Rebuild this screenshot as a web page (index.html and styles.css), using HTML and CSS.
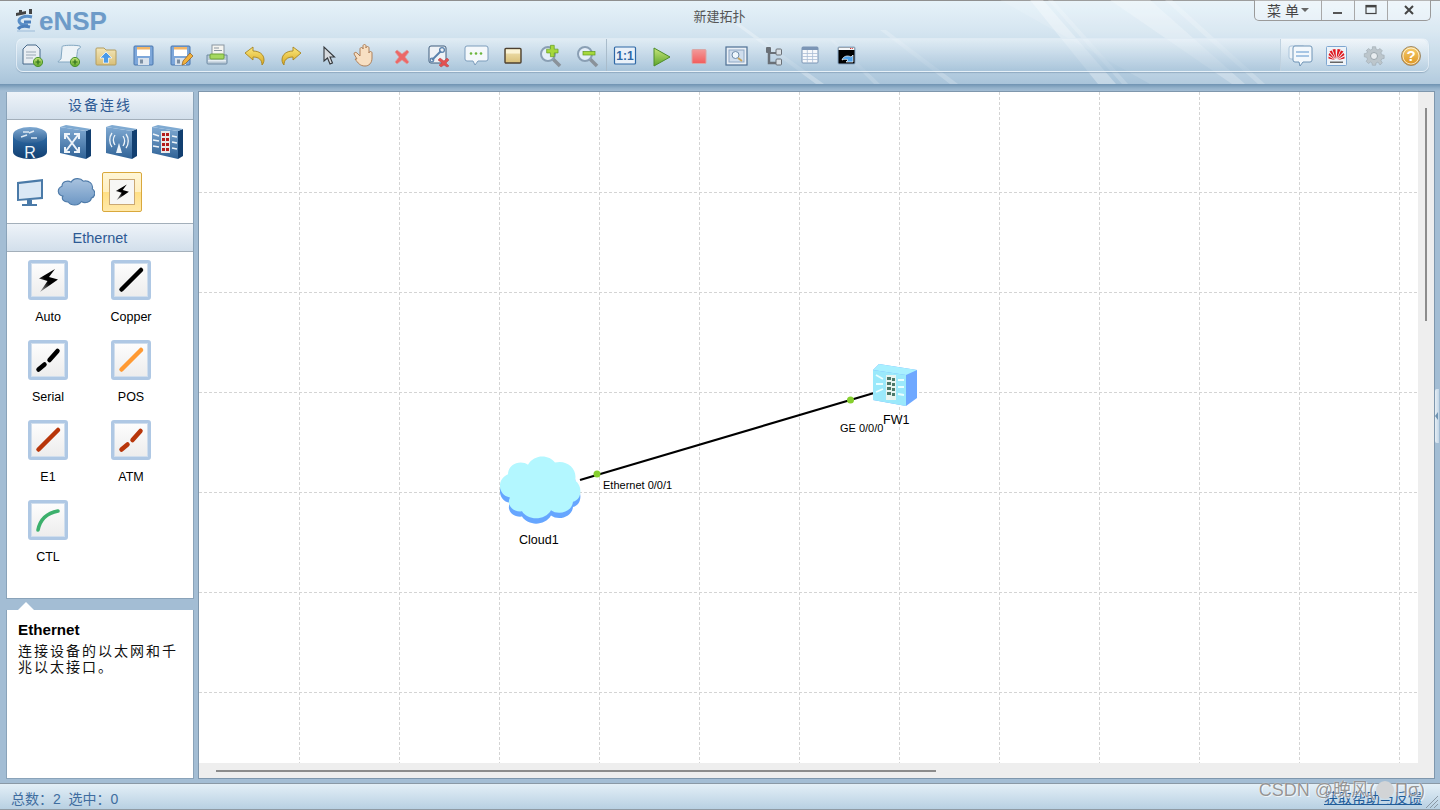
FILE: index.html
```html
<!DOCTYPE html>
<html lang="zh">
<head>
<meta charset="utf-8">
<title>eNSP</title>
<link rel="stylesheet" href="styles.css">
</head>
<body>
<svg class="defs" width="0" height="0" aria-hidden="true">
  <defs>
    <linearGradient id="g-blue" x1="0" y1="0" x2="0" y2="1"><stop offset="0" stop-color="#7fa9d2"/><stop offset="1" stop-color="#2f6296"/></linearGradient>
    <linearGradient id="g-side" x1="0" y1="0" x2="0" y2="1"><stop offset="0" stop-color="#2e6ca8"/><stop offset="1" stop-color="#123f70"/></linearGradient>
    <linearGradient id="g-tan" x1="0" y1="0" x2="0" y2="1"><stop offset="0" stop-color="#f3e6b8"/><stop offset="1" stop-color="#d8bf78"/></linearGradient>
    <linearGradient id="g-yel" x1="0" y1="0" x2="0" y2="1"><stop offset="0" stop-color="#fbe97f"/><stop offset="1" stop-color="#d8a820"/></linearGradient>
    <linearGradient id="g-red" x1="0" y1="0" x2="0" y2="1"><stop offset="0" stop-color="#f29a9a"/><stop offset="1" stop-color="#f25c5c"/></linearGradient>
    <linearGradient id="g-green" x1="0" y1="0" x2="0" y2="1"><stop offset="0" stop-color="#c7e57a"/><stop offset="1" stop-color="#5da52a"/></linearGradient>
    <linearGradient id="g-orange" x1="0" y1="0" x2="0" y2="1"><stop offset="0" stop-color="#f7cf6e"/><stop offset="1" stop-color="#dc9320"/></linearGradient>
    <linearGradient id="g-cloud" x1="0" y1="0" x2="0" y2="1"><stop offset="0" stop-color="#a9c3df"/><stop offset="1" stop-color="#6d97c4"/></linearGradient>
    <linearGradient id="g-bolt" x1="1" y1="0" x2="0" y2="1"><stop offset="0.55" stop-color="#000"/><stop offset="1" stop-color="#bbb"/></linearGradient>
    <path id="cloud-shape" d="M13 42C1 40-1 25 11 20 11 10 24 6 31 11 37 1 52 1 58 9 70 6 81 15 78 26 86 31 85 44 76 46 75 56 61 59 54 54 48 64 31 64 25 55 16 56 9 49 13 42Z"/>
    <path id="bolt" d="M23 5 7 14.500 15.500 17 8 28 26 15.500 17 13Z"/>
  </defs>
</svg>

<div class="window">
  <header class="header">
    <svg class="streaks" viewBox="0 0 1440 84" width="1440" height="84" aria-hidden="true">
      <polygon points="1000,0 1440,0 1440,84 1150,84" fill="#fff" opacity=".12"/>
      <polygon points="1030,0 1043,0 1116,84 1098,84" fill="#fff" opacity=".3"/>
      <polygon points="1048,0 1053,0 1128,84 1122,84" fill="#fff" opacity=".18"/>
      <polygon points="1110,0 1150,0 1245,84 1232,84" fill="#fff" opacity=".24"/>
      <polygon points="1165,0 1172,0 1265,84 1258,84" fill="#fff" opacity=".2"/>
      <polygon points="735,24 740,24 824,84 816,84" fill="#fff" opacity=".28"/>
      <polygon points="830,40 834,40 880,84 874,84" fill="#fff" opacity=".16"/>
      <polygon points="880,30 886,30 958,84 950,84" fill="#fff" opacity=".2"/>
    </svg>
    <div class="titlebar">
      <div class="logo">
        <svg class="logo-mark" viewBox="0 0 24 24" width="24" height="24" aria-hidden="true">
          <path d="M2 4 12 2 12 5 2 7Z M5 1h3v4H5z M15 0h3v5h-3z" fill="#444"/>
          <path d="M18 8C10 6 5 9 5 12s4 4 9 4" fill="none" stroke="#5b90c8" stroke-width="3"/>
          <path d="M10 13h7M4 20c3-4 8-3 12-2" fill="none" stroke="#4c80bc" stroke-width="3"/>
          <path d="M3 22h18" stroke="#9cbbd8" stroke-width="1"/>
        </svg>
        <span class="logo-text">eNSP</span>
      </div>
      <div class="title">新建拓扑</div>
      <div class="winctl">
        <div class="wbtn wbtn-menu">菜&nbsp;单<span class="caret"></span></div>
        <div class="wbtn wbtn-s"><svg viewBox="0 0 12 12" width="12" height="12"><rect x="1" y="8" width="9" height="2" fill="#555"/></svg></div>
        <div class="wbtn wbtn-s"><svg viewBox="0 0 12 12" width="12" height="12"><rect x="1" y="1.500" width="10" height="8" fill="none" stroke="#444" stroke-width="1.200"/><rect x="1" y="1" width="10" height="2.400" fill="#444"/></svg></div>
        <div class="wbtn wbtn-x"><svg viewBox="0 0 12 12" width="12" height="12"><path d="M2 2 10 10M10 2 2 10" stroke="#444" stroke-width="2"/></svg></div>
      </div>
    </div>

    <div class="toolbar">
      <div class="tsec tsec-a">
        <svg class="ic" viewBox="0 0 24 24"><path d="M7 1h9l4 4v15H3V5Z" fill="#e9eef3" stroke="#47698a"/><path d="M6 8h10M6 11h10M6 14h7" stroke="#9aa8b5"/><circle cx="18" cy="18" r="4.600" fill="url(#g-green)" stroke="#4c9430"/><path d="M15.500 18h5M18 15.500v5" stroke="#2d6e1c" stroke-width="1.200"/></svg>
        <svg class="ic" viewBox="0 0 24 24"><path d="M6 2C9 1 19 1 23 2 24 3 23 5 21 5 20 8 20 12 19 18H1C1 17 3 16 4 15L5 4C5 3 5 2 6 2Z" fill="#edf3f7" stroke="#83a7c1"/><circle cx="18" cy="18" r="4.600" fill="url(#g-green)" stroke="#4c9430"/><path d="M15.500 18h5M18 15.500v5" stroke="#2d6e1c" stroke-width="1.200"/></svg>
        <svg class="ic" viewBox="0 0 24 24"><path d="M2 5a1 1 0 0 1 1-1h7l2 2h9a1 1 0 0 1 1 1v13a1 1 0 0 1-1 1H3a1 1 0 0 1-1-1Z" fill="url(#g-tan)" stroke="#b39d5f"/><path d="M12 8l6 6h-3.500v5h-5v-5H6Z" fill="#4a9ae8" stroke="#fff" stroke-width=".7"/></svg>
        <svg class="ic" viewBox="0 0 24 24"><rect x="3" y="2" width="19" height="19" rx="1" fill="#7da7da" stroke="#4a76ad"/><rect x="6" y="3" width="13" height="9" fill="#fff"/><rect x="6" y="3" width="13" height="2.500" fill="#f3b667"/><rect x="7" y="14" width="11" height="7" fill="#d9e2ec"/><rect x="9" y="15.500" width="3" height="4" fill="#7d8fa3"/></svg>
        <svg class="ic" viewBox="0 0 24 24"><rect x="3" y="2" width="19" height="19" rx="1" fill="#7da7da" stroke="#4a76ad"/><rect x="6" y="3" width="13" height="9" fill="#fff"/><rect x="6" y="3" width="13" height="2.500" fill="#f3b667"/><rect x="7" y="14" width="11" height="7" fill="#d9e2ec"/><rect x="9" y="15.500" width="3" height="4" fill="#7d8fa3"/><path d="M14 21l1-4 7-8 3 3-8 8Z" fill="#f2b13c" stroke="#8a5a20" stroke-width=".7"/></svg>
        <svg class="ic" viewBox="0 0 24 24"><rect x="7" y="1" width="12" height="11" fill="#f4f4f0" stroke="#8a96a0"/><path d="M9 4h5M9 6.500h8" stroke="#8a96a0"/><path d="M2 11h20v8a1 1 0 0 1-1 1H3a1 1 0 0 1-1-1Z" fill="#b9c9d6" stroke="#6f8aa4"/><rect x="5" y="10" width="14" height="5" rx="1" fill="#a5d85f" stroke="#6ea33a"/><rect x="3" y="16" width="18" height="1.500" fill="#e7eef4"/></svg>
        <svg class="ic" viewBox="0 0 24 24"><path d="M3 9l8-6v4c6 0 11 3 11 9 0 2-1 4-2 5 0-5-3-8-9-8v3Z" fill="url(#g-yel)" stroke="#a88420" stroke-width=".9"/></svg>
        <svg class="ic" viewBox="0 0 24 24"><path d="M22 9l-8-6v4C8 7 3 10 3 16c0 2 1 4 2 5 0-5 3-8 9-8v3Z" fill="url(#g-yel)" stroke="#a88420" stroke-width=".9"/></svg>
        <svg class="ic" viewBox="0 0 24 24"><path d="M8 3v14l3.500-3 2.500 6 2.500-1-2.500-6h4.500Z" fill="#d6dade" stroke="#33373b" stroke-width="1.100"/></svg>
        <svg class="ic" viewBox="0 0 24 24"><path d="M4 15 1 10c0-2 2-2 3-1l3 3V5c0-2 3-2 3 0V2c0-2 3-2 3 0v2c0-2 3-2 3 0v5c0-2 3-2 3 0v5c0 5-3 8-7 8-5 0-7-3-10-7Z" fill="#f7dfc2" stroke="#a8774e" stroke-width=".9"/></svg>
        <svg class="ic" viewBox="0 0 24 24"><path d="M7 6 12 10 17 6 19 8 15 13 19 18 17 20 12 16 7 20 5 18 9 13 5 8Z" fill="#ec6868" stroke="#d9a0a0" stroke-width=".8"/></svg>
        <svg class="ic" viewBox="0 0 24 24"><rect x="2" y="2" width="17" height="17" rx="2" fill="#eef2f6" stroke="#3f5d7c"/><path d="M5 16 14 7" stroke="#5b83ad" stroke-width="2"/><circle cx="15" cy="6" r="2.400" fill="none" stroke="#5b83ad" stroke-width="1.300"/><circle cx="5" cy="16" r="1.800" fill="none" stroke="#5b83ad" stroke-width="1.200"/><path d="M13 14 17 17 20 14 22 16 19 19 22 22 20 23 17 21 14 23 12 21 15 19 11 16Z" fill="#e25050" stroke="#b54040" stroke-width=".5"/></svg>
        <svg class="ic" viewBox="0 0 24 24"><path d="M1 4a2 2 0 0 1 2-2h19a2 2 0 0 1 2 2v11a2 2 0 0 1-2 2H14l-3 4-2-4H3a2 2 0 0 1-2-2Z" fill="#f4f8fb" stroke="#7d9dbc"/><circle cx="7" cy="9.500" r="1.300" fill="#6bb53a"/><circle cx="12" cy="9.500" r="1.300" fill="#6bb53a"/><circle cx="17" cy="9.500" r="1.300" fill="#6bb53a"/></svg>
        <svg class="ic" viewBox="0 0 24 24"><rect x="4" y="4.500" width="16" height="14.500" rx="1" fill="url(#g-tan)" stroke="#4d4030" stroke-width="1.400"/><rect x="5" y="5.500" width="14" height="4" fill="#fbf4d7"/></svg>
        <svg class="ic" viewBox="0 0 24 24"><path d="M15 15 22 22" stroke="#8a929a" stroke-width="3.500"/><circle cx="10" cy="10" r="7" fill="#e4eef8" stroke="#8a9fb4" stroke-width="2"/><path d="M11 3.500h4v4h4v4h-4v4h-4v-4H7v-4h4Z" fill="#a6d83c" stroke="#5f9a1e" stroke-width=".7" transform="translate(2 -2) scale(.95)"/></svg>
        <svg class="ic" viewBox="0 0 24 24"><path d="M15 15 22 22" stroke="#8a929a" stroke-width="3.500"/><circle cx="10" cy="10" r="7" fill="#e4eef8" stroke="#8a9fb4" stroke-width="2"/><rect x="8" y="7.500" width="12" height="3.500" fill="#a6d83c" stroke="#5f9a1e" stroke-width=".7"/></svg>
      </div>
      <div class="tsec tsec-b">
        <svg class="ic" viewBox="0 0 24 24"><rect x="1.500" y="3" width="21" height="17" rx="1" fill="#e9f1f9" stroke="#2f68a6" stroke-width="1.200"/><text x="12" y="16" class="ratio">1:1</text></svg>
        <svg class="ic" viewBox="0 0 24 24"><path d="M4 4 20 13 4 22Z" fill="url(#g-green)" stroke="#4d8d2a"/></svg>
        <svg class="ic" viewBox="0 0 24 24"><rect x="5" y="5.500" width="14" height="14" rx="1" fill="url(#g-red)" stroke="#d9a6a6"/></svg>
        <svg class="ic" viewBox="0 0 24 24"><rect x="2" y="3" width="21" height="18" fill="#e9eff6" stroke="#4e6f93" stroke-width="1.200"/><rect x="5" y="6" width="15" height="12" fill="#cfdded" stroke="#8fa8c4"/><circle cx="11.500" cy="11" r="3.500" fill="#eef6fc" stroke="#6d8aa8"/><path d="M14 14 18 17" stroke="#c9a55c" stroke-width="1.800"/></svg>
        <svg class="ic" viewBox="0 0 24 24"><path d="M8 5V19H16" fill="none" stroke="#6a7077" stroke-width="2.500"/><path d="M8 9H16" stroke="#6a7077" stroke-width="2"/><rect x="5" y="3" width="5" height="6" rx="1" fill="#6a7077"/><rect x="15" y="5" width="5.500" height="6" rx="1" fill="#d8dfe5" stroke="#6a7077"/><rect x="15" y="15" width="5.500" height="6" rx="1" fill="#d8dfe5" stroke="#6a7077"/></svg>
        <svg class="ic" viewBox="0 0 24 24"><rect x="4" y="3" width="16" height="16" rx="1" fill="#f7f9fc" stroke="#7b95b5"/><rect x="4" y="3" width="16" height="3" fill="#7b95b5"/><path d="M4 9.500H20M4 12.500H20M4 15.500H20M9.300 6V19M14.600 6V19" stroke="#a9bdd4" stroke-width=".8"/></svg>
        <svg class="ic" viewBox="0 0 24 24"><rect x="3" y="3" width="17" height="17" rx="1" fill="#000" stroke="#86a6c6"/><rect x="3.500" y="3.500" width="16" height="2.500" fill="#f4f6f8"/><path d="M15 4.500h3" stroke="#d33" stroke-dasharray="1 .8"/><path d="M7 16c1-4 6-5 9-3l2-2v7h-7l2-2c-2-1-4-1-6 0Z" fill="#4da0e8" stroke="#fff" stroke-width=".7"/></svg>
      </div>
      <div class="tsec tsec-c">
        <svg class="ic" viewBox="0 0 24 24"><rect x="1" y="2" width="16" height="13" rx="2" fill="#eef4f9" stroke="#a9c3da"/><path d="M5 4a2 2 0 0 1 2-2h15a2 2 0 0 1 2 2v12a2 2 0 0 1-2 2h-7l-3 4-1-4H7a2 2 0 0 1-2-2Z" fill="#f3f8fc" stroke="#6f94b6"/><path d="M8 8h13M8 12h13" stroke="#5c94cc"/></svg>
        <svg class="ic" viewBox="0 0 24 24"><rect x="1.500" y="2.500" width="20" height="19" rx="1" fill="#eef3f8" stroke="#7ea7d1"/><g fill="#e0161c"><path d="M11 15 7.500 5.500 10.500 5Z"/><path d="M11.500 15 12.500 5 15.500 5.500Z"/><path d="M10.500 15 4.500 7.500 6.800 6.500Z"/><path d="M12 15 16 6.500 18.500 7.500Z"/><path d="M10 15.500 3.500 11 4.500 9Z"/><path d="M12.500 15.500 18.500 9 19.500 11Z"/><path d="M10 16 3.500 14.500 3.500 12.500Z"/><path d="M13 16 19.500 12.500 19.500 14.500Z"/></g><rect x="5" y="17.500" width="13" height="1.500" fill="#666"/></svg>
        <svg class="ic" viewBox="0 0 24 24"><path d="M10 1h4l.6 3 2.400 1 2.600-1.700 2.800 2.800L20.700 8.700l1 2.300 3 .6v4l-3 .6-1 2.300 1.700 2.600-2.800 2.800L17 20.200l-2.400 1-.6 3h-4l-.6-3L7.600 20.200 5 22l-2.800-2.800 1.700-2.600-1-2.300-3-.6v-4l3-.6 1-2.300L2.200 6.100 5 3.300l2.600 1.700L10 4Z" fill="#bcc6cc" stroke="#9aa6ad" stroke-width=".7" transform="translate(2.400 1.900) scale(.8)"/><circle cx="12" cy="12" r="3.500" fill="#e8edf0" stroke="#9aa6ad"/></svg>
        <svg class="ic" viewBox="0 0 24 24"><circle cx="12" cy="12" r="9.500" fill="url(#g-orange)" stroke="#9e8a6a"/><circle cx="12" cy="12" r="8" fill="none" stroke="#fff" stroke-opacity=".7"/><text x="12" y="17" class="help">?</text></svg>
      </div>
    </div>
  </header>

  <div class="rule"></div>

  <main class="main">
    <aside class="side">
      <section class="panel">
        <h2 class="phead phead-cn">设备连线</h2>
        <div class="devices">
          <div class="dev">
            <svg viewBox="0 0 36 36" width="36" height="36"><path d="M1 10v17c0 4 8 7 17 7s17-3 17-7V10Z" fill="url(#g-side)"/><ellipse cx="18" cy="10" rx="17" ry="8" fill="url(#g-blue)"/><path d="M11 7h6M19 13h6M22 6l-5 2M9 12l6-2" stroke="#dce8f2" stroke-width="1.400"/><text x="18" y="33" class="r-letter">R</text></svg>
          </div>
          <div class="dev">
            <svg viewBox="0 0 36 36" width="36" height="36"><path d="M2 2 28 6V34L2 28Z" fill="url(#g-blue)"/><path d="M28 6 33 4V31L28 34Z" fill="#123f70"/><path d="M2 2 8 0 33 4 28 6Z" fill="#7faad2"/><g stroke="#eef4f9" stroke-width="2" fill="none"><path d="M8 10 20 26M8 26 20 10"/><path d="M7 14V9H12M21 14V9H16M7 22V27H12M21 22V27H16"/></g></svg>
          </div>
          <div class="dev">
            <svg viewBox="0 0 36 36" width="36" height="36"><path d="M2 2 28 6V34L2 28Z" fill="url(#g-blue)"/><path d="M28 6 33 4V31L28 34Z" fill="#123f70"/><path d="M2 2 8 0 33 4 28 6Z" fill="#7faad2"/><path d="M15 18 12 28H18Z" fill="#eef4f9"/><g stroke="#eef4f9" stroke-width="1.300" fill="none"><path d="M11 10c-2 3-2 7 0 10M19 11c2 3 2 7 0 10M8 8c-3 4-3 10 0 14M22 9c3 4 3 10 0 14"/></g></svg>
          </div>
          <div class="dev">
            <svg viewBox="0 0 36 36" width="36" height="36"><path d="M2 2 28 6V34L2 28Z" fill="url(#g-blue)"/><path d="M28 6 33 4V31L28 34Z" fill="#123f70"/><path d="M2 2 8 0 33 4 28 6Z" fill="#7faad2"/><rect x="11" y="6" width="9" height="22" fill="#e8e8e8"/><path d="M12 8h3v3h-3zM16 8h3v3h-3zM12 13h3v3h-3zM16 13h3v3h-3zM12 18h3v3h-3zM16 18h3v3h-3zM12 23h3v3h-3zM16 23h3v3h-3z" fill="#b31b1b"/><path d="M3 9l6 2M3 15l6 1M3 21l6 1M22 11l5 1M22 17l5 1M22 23l5 1" stroke="#eef4f9" stroke-width="1.400"/></svg>
          </div>
          <div class="dev">
            <svg viewBox="0 0 36 36" width="36" height="36"><path d="M5 8 31 5V25L5 27Z" fill="#4a7aa8"/><path d="M7 10 29 7.500V23L7 25Z" fill="#dbe8f5"/><path d="M15 26H20V30H25V32H10V30H15Z" fill="#4a7aa8"/></svg>
          </div>
          <div class="dev">
            <svg viewBox="0 0 84 68" width="38" height="31"><use href="#cloud-shape" fill="url(#g-cloud)" stroke="#4f7ba9" stroke-width="2.500"/></svg>
          </div>
          <div class="dev dev-on">
            <div class="dev-card"><svg viewBox="0 0 32 32" width="22" height="22"><use href="#bolt" fill="url(#g-bolt)"/></svg></div>
          </div>
        </div>
        <h2 class="phead phead-en">Ethernet</h2>
        <div class="cables">
          <div class="cable">
            <div class="cable-ic"><svg viewBox="0 0 32 32" width="32" height="32"><use href="#bolt" fill="url(#g-bolt)"/></svg></div>
            <div class="cable-label">Auto</div>
          </div>
          <div class="cable">
            <div class="cable-ic"><svg viewBox="0 0 32 32" width="32" height="32"><path d="M6.500 25.500 26 6" stroke="#000" stroke-width="4.500" stroke-linecap="round"/></svg></div>
            <div class="cable-label">Copper</div>
          </div>
          <div class="cable">
            <div class="cable-ic"><svg viewBox="0 0 32 32" width="32" height="32"><path d="M6.500 25.500 12.500 20.500M17.500 16 25.500 7" stroke="#000" stroke-width="4.500" stroke-linecap="round"/></svg></div>
            <div class="cable-label">Serial</div>
          </div>
          <div class="cable">
            <div class="cable-ic"><svg viewBox="0 0 32 32" width="32" height="32"><path d="M6.500 25.500 26 6" stroke="#ff9a33" stroke-width="4.500" stroke-linecap="round"/></svg></div>
            <div class="cable-label">POS</div>
          </div>
          <div class="cable">
            <div class="cable-ic"><svg viewBox="0 0 32 32" width="32" height="32"><path d="M6.500 25.500 26 6" stroke="#b8360a" stroke-width="4.500" stroke-linecap="round"/></svg></div>
            <div class="cable-label">E1</div>
          </div>
          <div class="cable">
            <div class="cable-ic"><svg viewBox="0 0 32 32" width="32" height="32"><path d="M6.500 25.500 12.500 20.500M17.500 16 25.500 7" stroke="#b8360a" stroke-width="4.500" stroke-linecap="round"/></svg></div>
            <div class="cable-label">ATM</div>
          </div>
          <div class="cable">
            <div class="cable-ic"><svg viewBox="0 0 32 32" width="32" height="32"><path d="M6 26C8 16 15 9 26 7" fill="none" stroke="#3cb06c" stroke-width="3.600" stroke-linecap="round"/></svg></div>
            <div class="cable-label">CTL</div>
          </div>
        </div>
      </section>
      <section class="info">
        <span class="notch"></span>
        <div class="info-title">Ethernet</div>
        <div class="info-text">连接设备的以太网和千兆以太接口。</div>
      </section>
    </aside>

    <section class="canvas">
      <svg class="topo" viewBox="199 92 1219 671" width="1219" height="671">
        <g class="gridlines">
          <path d="M299.500 92V763M399.500 92V763M499.500 92V763M599.500 92V763M699.500 92V763M799.500 92V763M899.500 92V763M999.500 92V763M1099.500 92V763M1199.500 92V763M1299.500 92V763M1399.500 92V763"/>
          <path d="M199 192.500H1418M199 292.500H1418M199 392.500H1418M199 492.500H1418M199 592.500H1418M199 692.500H1418"/>
        </g>
        <line x1="580" y1="480" x2="874" y2="393" class="link"/>
        <circle cx="597" cy="474" r="3.500" class="port"/>
        <circle cx="850.500" cy="400" r="3.500" class="port"/>

        <g transform="translate(497 453) scale(1 1.060)">
          <use href="#cloud-shape" y="5" class="cloud-back"/>
          <use href="#cloud-shape" class="cloud-front"/>
        </g>

        <g transform="translate(873 364)">
          <path d="M0 6 6 0 44 6V34L33 42 0 36Z" fill="#6ea8ff"/>
          <path d="M0 6 6 0 44 6 33 11Z" fill="#a8f0ff"/>
          <path d="M0 6 33 11V42L0 36Z" fill="#9be9fb"/>
          <rect x="13" y="11" width="10" height="25" fill="#e8f4f0"/>
          <path d="M14 13h4v3h-4zM19 14h3v3h-3zM14 18h4v3h-4zM19 19h3v3h-3zM14 23h4v3h-4zM19 24h3v3h-3zM14 28h4v3h-4zM19 29h3v3h-3z" fill="#4d7a6a"/>
          <path d="M3 11l7 4M3 20h7M3 28l7-3M25 16h6M25 23h6M25 30l6 1" stroke="#eaffff" stroke-width="1.800"/>
        </g>

        <text x="603" y="489" class="tlabel">Ethernet 0/0/1</text>
        <text x="840" y="432" class="tlabel">GE 0/0/0</text>
        <text x="519" y="544" class="nlabel">Cloud1</text>
        <text x="883" y="424" class="nlabel">FW1</text>
      </svg>
      <div class="vscroll"><div class="vthumb"></div></div>
      <div class="hscroll"><div class="hthumb"></div></div>
      <div class="corner"></div>
      <span class="collapse"></span>
    </section>
  </main>

  <footer class="status">
    <div class="counts">总数：2&nbsp;&nbsp;选中：0</div>
    <a class="help-link">获取帮助与反馈</a>
    <svg class="grip" viewBox="0 0 14 14" width="14" height="14"><path d="M1 13 13 1M5 13 13 5M9 13 13 9" stroke="#8a98a4"/></svg>
    <div class="watermark">CSDN @晚风(<span class="wm-dot"></span>Пσ)</div>
  </footer>
</div>
</body>
</html>
```
FILE: styles.css
```css
* { box-sizing: border-box; }
html, body { margin: 0; padding: 0; }
body {
  width: 1440px;
  height: 810px;
  overflow: hidden;
  font-family: "Liberation Sans", "Noto Sans CJK SC", sans-serif;
  background: #a3bdd4;
}
.defs { position: absolute; }
.window { display: flex; flex-direction: column; width: 1440px; height: 810px; }

/* header */
.header {
  position: relative;
  height: 84px;
  flex: none;
  border-top: 1px solid #8f8f8f;
  background: linear-gradient(#e6f2f9 0%, #d6e6f1 35%, #bcd3e4 75%, #a9c4da 100%);
}
.streaks { position: absolute; left: 0; top: -1px; }
.titlebar {
  position: relative;
  display: grid;
  grid-template-columns: 1fr auto 1fr;
  height: 37px;
  padding-right: 9px;
}
.logo { display: flex; align-items: flex-start; padding: 8px 0 0 14px; gap: 1px; }
.logo-mark { flex: none; }
.logo-text {
  font-size: 26px;
  font-weight: 700;
  line-height: 25px;
  color: #6d9bc8;
  text-shadow: 0 1px 0 #d4e4f0;
}
.title {
  margin-left: 8px;
  padding-top: 8px;
  font-size: 13px;
  line-height: 16px;
  color: #555;
}
.winctl {
  justify-self: end;
  display: flex;
  height: 21px;
  margin-top: -1px;
  border: 1px solid #9a9a9a;
  border-top: 0;
  border-radius: 0 0 5px 5px;
  background: rgba(255, 255, 255, .28);
}
.wbtn {
  display: flex;
  align-items: center;
  justify-content: center;
  height: 100%;
  border-left: 1px solid #a8a8a8;
}
.wbtn:first-child { border-left: 0; }
.wbtn-menu { width: 66px; font-size: 14px; color: #444; }
.wbtn-s { width: 33px; }
.wbtn-x { width: 43px; }
.caret {
  margin-left: 2px;
  border: 4px solid transparent;
  border-top: 4px solid #666;
  border-bottom: 0;
}
.toolbar {
  position: relative;
  display: flex;
  height: 34px;
  margin: 0 11px 0 16px;
  border: 1px solid rgba(235, 243, 249, .75);
  border-radius: 7px;
  background: linear-gradient(rgba(238, 245, 250, .55), rgba(160, 190, 214, .55));
  box-shadow: 0 1px 1px rgba(90, 120, 150, .4);
}
.tsec { display: flex; align-items: center; gap: 13px; height: 100%; padding-top: 2px; }
.tsec-a { width: 590px; padding-left: 3px; border-right: 1px solid #a9bccb; }
.tsec-b { padding-left: 6px; flex: 1; }
.tsec-c {
  width: 148px;
  padding-left: 7px;
  border-left: 1px solid #c0d2e0;
  background: linear-gradient(rgba(255, 255, 255, .45), rgba(200, 220, 235, .35));
  border-radius: 0 7px 7px 0;
}
.ic { flex: none; width: 24px; height: 24px; overflow: visible; }
.ratio { font: 700 12px "Liberation Sans", sans-serif; fill: #2f68a6; text-anchor: middle; }
.help { font: 700 15px "Liberation Sans", sans-serif; fill: #fff; text-anchor: middle; }
.rule {
  height: 7px;
  flex: none;
  background: linear-gradient(#6f93b2, #94b2cb 60%, #a3bdd4);
}

/* main */
.main { display: flex; flex: none; height: 692px; padding: 0 5px 4px 6px; gap: 4px; }
.side { display: flex; flex-direction: column; width: 188px; flex: none; padding-top: 1px; }
.panel {
  height: 507px;
  flex: none;
  border: 1px solid #8aa3b9;
  border-top: 0;
  background: #fff;
}
.phead {
  height: 28px;
  margin: 0;
  text-align: center;
  font-weight: 400;
  font-size: 14px;
  line-height: 27px;
  color: #2d5a94;
  background: linear-gradient(#eef3f9, #d2dfeb);
  border-bottom: 1px solid #a3afba;
}
.phead-cn { letter-spacing: 2px; }
.phead-en { border-top: 1px solid #a3afba; height: 29px; line-height: 28px; font-size: 14.500px; }
.devices {
  display: grid;
  grid-template-columns: repeat(4, 46px);
  grid-template-rows: 46px 52px 4px;
  height: 103px;
}
.dev { display: flex; align-items: center; justify-content: center; }
.dev-on { padding: 0; }
.dev-card {
  display: flex;
  align-items: center;
  justify-content: center;
  width: 40px;
  height: 40px;
  border: 1px solid #d9a83c;
  border-radius: 2px;
  background: linear-gradient(#fff6d6 0%, #ffefbf 50%, #ffdf85 51%, #ffe9ab 100%);
}
.dev-card svg { background: #f7f7f5; border: 1px solid #caa874; box-sizing: content-box; width: 22px; height: 22px; padding: 1px; }
.cables {
  display: grid;
  grid-template-columns: 80px 80px;
  grid-auto-rows: 64px;
  column-gap: 3px;
  row-gap: 16px;
  padding: 8px 0 0 1px;
}
.cable { display: flex; flex-direction: column; align-items: center; }
.cable-ic {
  width: 40px;
  height: 40px;
  border: 3px solid #afc8e4;
  border-radius: 3px;
  padding: 1px;
  background: linear-gradient(#fdfdfd, #ececec);
  box-shadow: 0 0 0 0 #fff, inset 0 0 0 1px #d0deed;
}
.cable-ic svg { display: block; }
.cable-label {
  margin-top: 10px;
  font-size: 12.500px;
  line-height: 14px;
  color: #000;
}
.info {
  position: relative;
  flex: none;
  height: 169px;
  margin-top: 11px;
  padding: 12px 11px 0;
  border: 1px solid #8aa3b9;
  border-top: 0;
  background: #fff;
}
.notch {
  position: absolute;
  left: 11px;
  top: -8px;
  border: 8px solid transparent;
  border-bottom: 8px solid #fff;
  border-top: 0;
}
.info-title { font-size: 15.200px; font-weight: 700; line-height: 16px; color: #000; }
.info-text {
  width: 166px;
  margin-top: 5px;
  font-size: 14px;
  line-height: 16px;
  letter-spacing: 2px;
  color: #111;
}

/* canvas */
.canvas {
  position: relative;
  display: grid;
  grid-template-columns: 1219px 16px;
  grid-template-rows: 671px 15px;
  width: 1237px;
  height: 688px;
  border: 1px solid #7f97ad;
  background: #eee;
}
.topo { display: block; background: #fff; }
.gridlines path { fill: none; stroke: #d4d4d4; stroke-width: 1; stroke-dasharray: 3 2; }
.link { stroke: #000; stroke-width: 2.200; }
.port { fill: #86cf2e; }
.cloud-back { fill: #66a6ff; }
.cloud-front { fill: #b3f7ff; }
.tlabel { font: 11px "Liberation Sans", sans-serif; fill: #000; }
.nlabel { font: 12.500px "Liberation Sans", sans-serif; fill: #000; }
.r-letter { font: 400 16px "Liberation Sans", sans-serif; fill: #eef4f9; text-anchor: middle; }
.vscroll { padding: 16px 0 0 7px; background: #eee; }
.vthumb { width: 2px; height: 213px; background: #8c8c8c; }
.hscroll { padding: 7px 0 0 17px; background: #eee; }
.hthumb { width: 720px; height: 2px; background: #8c8c8c; }
.corner { background: #eee; }
.collapse {
  position: absolute;
  right: -5px;
  top: 297px;
  width: 4px;
  height: 54px;
  border-radius: 2px 0 0 2px;
  background: linear-gradient(90deg, #e6eef5, #c4d6e6);
}
.collapse::after {
  content: "";
  position: absolute;
  left: 0;
  top: 23px;
  border: 4px solid transparent;
  border-right: 3px solid #6f93b2;
  border-left: 0;
}

/* status */
.status {
  position: relative;
  display: flex;
  align-items: center;
  justify-content: space-between;
  flex: 1;
  padding: 2px 18px 0 11px;
  border-top: 1px solid #8a99a6;
  border-bottom: 1px solid #8f9aa3;
  background: linear-gradient(#e3eff7, #b8d0e2);
}
.counts { font-size: 14px; color: #3f6d9f; }
.help-link {
  font-size: 14px;
  line-height: 16px;
  color: #1f5c99;
  text-decoration: underline;
}
.grip { position: absolute; right: 1px; bottom: 0; }
.watermark {
  position: absolute;
  right: 15px;
  top: -5px;
  display: flex;
  align-items: center;
  font-size: 18px;
  line-height: 22px;
  color: rgba(130, 130, 130, .85);
  text-shadow: 0 0 1px #fff, 1px 1px 0 rgba(255, 255, 255, .6);
  white-space: nowrap;
}
.wm-dot {
  width: 18px;
  height: 18px;
  border-radius: 50%;
  background: #d2d4d6;
  margin: 0 1px;
}
```
